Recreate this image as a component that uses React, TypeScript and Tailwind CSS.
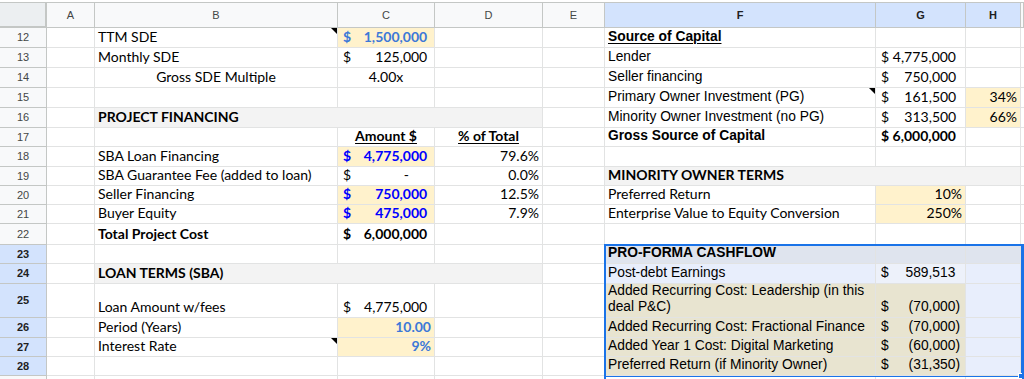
import type { ReactNode } from "react";

const ARIAL = "font-['Liberation_Sans',Arial,sans-serif] text-[13.8px]";
const CAL = "font-['Lato',sans-serif] text-[14px]";

const cellBase =
  "relative flex items-end min-w-0 overflow-hidden border-r border-b border-[#e2e3e3] px-[3px] pb-[2px] leading-[16px] text-[#000]";

function Cell({
  children,
  className = "",
  wrap = false,
}: {
  children?: ReactNode;
  className?: string;
  wrap?: boolean;
}) {
  return (
    <div className={`${cellBase} ${wrap ? "whitespace-normal" : "whitespace-nowrap"} ${className}`}>{children}</div>
  );
}

function ColHead({ label, sel = false }: { label: string; sel?: boolean }) {
  return (
    <div
      className={`flex items-center justify-center border-r border-b border-[#c4c7c5] font-['Liberation_Sans',Arial,sans-serif] text-[11px] ${
        sel ? "bg-[#d3e3fd] font-bold text-[#1f1f1f]" : "bg-[#f8f9fa] text-[#444746]"
      }`}
    >
      {label}
    </div>
  );
}

function RowHead({ n, sel = false }: { n?: number; sel?: boolean }) {
  return (
    <div
      className={`flex items-center justify-center border-r border-b border-[#c4c7c5] font-['Liberation_Sans',Arial,sans-serif] text-[11px] ${
        sel ? "bg-[#d3e3fd] font-bold text-[#1f1f1f]" : "bg-[#f8f9fa] text-[#444746]"
      }`}
    >
      {n}
    </div>
  );
}

// accounting format: "$" on the left, number on the right, room kept for ")"
function Acct({ v, neg = false }: { v: string; neg?: boolean }) {
  return (
    <div className="flex w-full justify-between pl-[2px]">
      <span>$</span>
      <span>
        {v}
        {!neg && <span className="invisible">)</span>}
      </span>
    </div>
  );
}

// small black note marker in the top-right corner of a cell
function Note() {
  return (
    <span className="absolute top-0 right-0 h-0 w-0 border-t-[6px] border-l-[6px] border-t-black border-l-transparent" />
  );
}

export default function App() {
  return (
    <div className="w-[1024px] h-[379px] overflow-hidden bg-white pt-[2px]">
      <div className="relative grid grid-cols-[47px_48px_243px_97px_108px_62px_271px_90px_55px_3px] grid-rows-[25px_20px_20px_20px_20px_20px_19px_20px_19px_19px_19px_21px_19px_20px_34px_20px_19px_19px_8px] border-t border-[#c4c7c5]">
        {/* column headers */}
        <div className="border-r-2 border-b-2 border-[#c4c7c5] bg-[#eceff1]" />
        <ColHead label="A" />
        <ColHead label="B" />
        <ColHead label="C" />
        <ColHead label="D" />
        <ColHead label="E" />
        <ColHead label="F" sel />
        <ColHead label="G" sel />
        <ColHead label="H" sel />
        <ColHead label="" />

        {/* 12 */}
        <RowHead n={12} />
        <Cell />
        <Cell className={CAL}>
          TTM SDE
          <Note />
        </Cell>
        <Cell className={`${CAL} bg-[#fff2cc] font-bold text-[#3c78d8]`}>
          <Acct v="1,500,000" />
        </Cell>
        <Cell />
        <Cell />
        <Cell className={`${ARIAL} font-bold underline underline-offset-2`}>Source of Capital</Cell>
        <Cell />
        <Cell />
        <Cell />

        {/* 13 */}
        <RowHead n={13} />
        <Cell />
        <Cell className={CAL}>Monthly SDE</Cell>
        <Cell className={CAL}>
          <Acct v="125,000" />
        </Cell>
        <Cell />
        <Cell />
        <Cell className={ARIAL}>Lender</Cell>
        <Cell className={`${CAL} justify-end pr-[9px]`}>$ 4,775,000</Cell>
        <Cell />
        <Cell />

        {/* 14 */}
        <RowHead n={14} />
        <Cell />
        <Cell className={`${CAL} justify-center`}>Gross SDE Multiple</Cell>
        <Cell className={`${CAL} justify-center`}>4.00x</Cell>
        <Cell />
        <Cell />
        <Cell className={ARIAL}>Seller financing</Cell>
        <Cell className={`${CAL} pr-[5px]`}>
          <Acct v="750,000" />
        </Cell>
        <Cell />
        <Cell />

        {/* 15 */}
        <RowHead n={15} />
        <Cell />
        <Cell />
        <Cell />
        <Cell />
        <Cell />
        <Cell className={ARIAL}>
          Primary Owner Investment (PG)
          <Note />
        </Cell>
        <Cell className={`${CAL} pr-[5px]`}>
          <Acct v="161,500" />
        </Cell>
        <Cell className={`${CAL} justify-end bg-[#fff2cc]`}>34%</Cell>
        <Cell />

        {/* 16 */}
        <RowHead n={16} />
        <Cell />
        <Cell className={`${CAL} col-span-3 bg-[#f3f3f3] font-bold`}>PROJECT FINANCING</Cell>
        <Cell />
        <Cell className={ARIAL}>Minority Owner Investment (no PG)</Cell>
        <Cell className={`${CAL} pr-[5px]`}>
          <Acct v="313,500" />
        </Cell>
        <Cell className={`${CAL} justify-end bg-[#fff2cc]`}>66%</Cell>
        <Cell />

        {/* 17 */}
        <RowHead n={17} />
        <Cell />
        <Cell />
        <Cell className={`${CAL} justify-center font-bold underline underline-offset-2`}>Amount $</Cell>
        <Cell className={`${CAL} justify-center font-bold underline underline-offset-2`}>% of Total</Cell>
        <Cell />
        <Cell className={`${ARIAL} font-bold`}>Gross Source of Capital</Cell>
        <Cell className={`${CAL} justify-end pr-[9px] font-bold`}>$ 6,000,000</Cell>
        <Cell />
        <Cell />

        {/* 18 */}
        <RowHead n={18} />
        <Cell />
        <Cell className={CAL}>SBA Loan Financing</Cell>
        <Cell className={`${CAL} bg-[#fff2cc] font-bold text-[#0000ff]`}>
          <Acct v="4,775,000" />
        </Cell>
        <Cell className={`${CAL} justify-end`}>79.6%</Cell>
        <Cell />
        <Cell />
        <Cell />
        <Cell />
        <Cell />

        {/* 19 */}
        <RowHead n={19} />
        <Cell />
        <Cell className={CAL}>SBA Guarantee Fee (added to loan)</Cell>
        <Cell className={CAL}>
          <div className="flex w-full justify-between pl-[2px] pr-[22px]">
            <span>$</span>
            <span>-</span>
          </div>
        </Cell>
        <Cell className={`${CAL} justify-end`}>0.0%</Cell>
        <Cell />
        <Cell className={`${CAL} col-span-3 bg-[#f3f3f3] font-bold`}>MINORITY OWNER TERMS</Cell>
        <Cell />

        {/* 20 */}
        <RowHead n={20} />
        <Cell />
        <Cell className={CAL}>Seller Financing</Cell>
        <Cell className={`${CAL} bg-[#fff2cc] font-bold text-[#0000ff]`}>
          <Acct v="750,000" />
        </Cell>
        <Cell className={`${CAL} justify-end`}>12.5%</Cell>
        <Cell />
        <Cell className={CAL}>Preferred Return</Cell>
        <Cell className={`${CAL} justify-end bg-[#fff2cc]`}>10%</Cell>
        <Cell />
        <Cell />

        {/* 21 */}
        <RowHead n={21} />
        <Cell />
        <Cell className={CAL}>Buyer Equity</Cell>
        <Cell className={`${CAL} bg-[#fff2cc] font-bold text-[#0000ff]`}>
          <Acct v="475,000" />
        </Cell>
        <Cell className={`${CAL} justify-end`}>7.9%</Cell>
        <Cell />
        <Cell className={CAL}>Enterprise Value to Equity Conversion</Cell>
        <Cell className={`${CAL} justify-end bg-[#fff2cc]`}>250%</Cell>
        <Cell />
        <Cell />

        {/* 22 */}
        <RowHead n={22} />
        <Cell />
        <Cell className={`${CAL} font-bold`}>Total Project Cost</Cell>
        <Cell className={`${CAL} font-bold`}>
          <Acct v="6,000,000" />
        </Cell>
        <Cell />
        <Cell />
        <Cell />
        <Cell />
        <Cell />
        <Cell />

        {/* 23 */}
        <RowHead n={23} sel />
        <Cell />
        <Cell />
        <Cell />
        <Cell />
        <Cell />
        <Cell className={`${ARIAL} bg-[#dfe4ee] font-bold`}>PRO-FORMA CASHFLOW</Cell>
        <Cell className="bg-[#dfe4ee]" />
        <Cell className="bg-[#dfe4ee]" />
        <Cell />

        {/* 24 */}
        <RowHead n={24} sel />
        <Cell />
        <Cell className={`${CAL} col-span-3 bg-[#f3f3f3] font-bold`}>LOAN TERMS (SBA)</Cell>
        <Cell />
        <Cell className={`${ARIAL} bg-[#e8eefc]`}>Post-debt Earnings</Cell>
        <Cell className={`${ARIAL} bg-[#edf1fa] pr-[5px]`}>
          <Acct v="589,513" />
        </Cell>
        <Cell className="bg-[#e8eefc]" />
        <Cell />

        {/* 25 */}
        <RowHead n={25} sel />
        <Cell />
        <Cell className={CAL}>Loan Amount w/fees</Cell>
        <Cell className={CAL}>
          <Acct v="4,775,000" />
        </Cell>
        <Cell />
        <Cell />
        <Cell wrap className={`${ARIAL} bg-[#e8e4d0]`}>
          <span>Added Recurring Cost: Leadership (in this deal P&amp;C)</span>
        </Cell>
        <Cell className={`${ARIAL} bg-[#e8e4d0] pr-[5px]`}>
          <Acct v="(70,000)" neg />
        </Cell>
        <Cell className="bg-[#e8eefc]" />
        <Cell />

        {/* 26 */}
        <RowHead n={26} sel />
        <Cell />
        <Cell className={CAL}>Period (Years)</Cell>
        <Cell className={`${CAL} justify-end bg-[#fff2cc] font-bold text-[#3c78d8]`}>10.00</Cell>
        <Cell />
        <Cell />
        <Cell className={`${ARIAL} bg-[#e8e4d0]`}>Added Recurring Cost: Fractional Finance</Cell>
        <Cell className={`${ARIAL} bg-[#e8e4d0] pr-[5px]`}>
          <Acct v="(70,000)" neg />
        </Cell>
        <Cell className="bg-[#e8eefc]" />
        <Cell />

        {/* 27 */}
        <RowHead n={27} sel />
        <Cell />
        <Cell className={CAL}>
          Interest Rate
          <Note />
        </Cell>
        <Cell className={`${CAL} justify-end bg-[#fff2cc] font-bold text-[#3c78d8]`}>9%</Cell>
        <Cell />
        <Cell />
        <Cell className={`${ARIAL} bg-[#e8e4d0]`}>Added Year 1 Cost: Digital Marketing</Cell>
        <Cell className={`${ARIAL} bg-[#e8e4d0] pr-[5px]`}>
          <Acct v="(60,000)" neg />
        </Cell>
        <Cell className="bg-[#e8eefc]" />
        <Cell />

        {/* 28 */}
        <RowHead n={28} sel />
        <Cell />
        <Cell />
        <Cell />
        <Cell />
        <Cell />
        <Cell className={`${ARIAL} bg-[#e8e4d0]`}>Preferred Return (if Minority Owner)</Cell>
        <Cell className={`${ARIAL} bg-[#e8e4d0] pr-[5px]`}>
          <Acct v="(31,350)" neg />
        </Cell>
        <Cell className="bg-[#e8eefc]" />
        <Cell />

        {/* 29, cut off at the bottom edge */}
        <RowHead />
        <Cell />
        <Cell />
        <Cell />
        <Cell />
        <Cell />
        <Cell />
        <Cell />
        <Cell />
        <Cell />

        {/* selection range F23:H28 and active cell F23 */}
        <div className="pointer-events-none absolute -top-px -left-px -right-px -bottom-px col-start-7 col-span-3 row-start-13 row-span-6 border border-[#1a73e8]">
          <span className="absolute -right-[3px] -bottom-[3px] h-[6px] w-[6px] border border-white bg-[#1a73e8]" />
        </div>
        <div className="pointer-events-none absolute -top-px -left-px right-0 bottom-0 col-start-7 row-start-13 border-2 border-[#1a73e8]" />
      </div>
    </div>
  );
}
